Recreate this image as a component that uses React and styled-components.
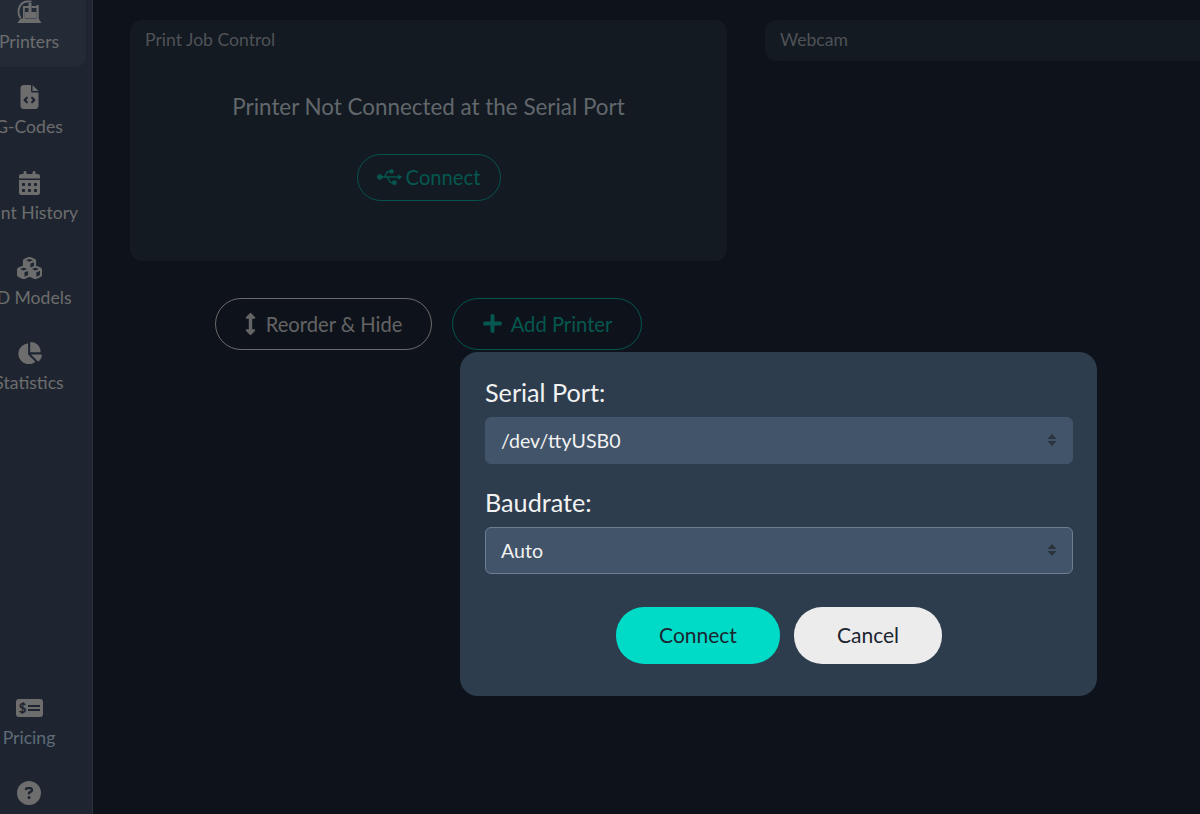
import React from 'react';
import styled, { createGlobalStyle } from 'styled-components';
import { FaArrowsAltV, FaPlus } from 'react-icons/fa';
import { FaFileCode, FaCalendarDays, FaCubes, FaChartPie, FaCircleQuestion, FaUsb } from 'react-icons/fa6';

const GlobalStyle = createGlobalStyle`
  html, body {
    margin: 0;
    height: 814px;
    overflow: hidden;
    background: #0e131b;
    font-family: Lato, "Liberation Sans", sans-serif;
  }
  #root {
    height: 100%;
  }
`;

const Page = styled.div`
  position: relative;
  display: flex;
  height: 814px;
  overflow: hidden;
`;

const Sidebar = styled.aside`
  flex: 0 0 93px;
  box-sizing: border-box;
  height: 814px;
  display: flex;
  flex-direction: column;
  align-items: flex-end;
  padding-right: 6px;
  background: #1e2530;
  border-right: 1px solid #2a313c;
  overflow: hidden;
`;

const NavGroup = styled.nav`
  display: flex;
  flex-direction: column;
  margin-top: -18px;
`;

const NavItem = styled.div`
  flex: 0 0 85.25px;
  width: 114px;
  box-sizing: border-box;
  padding-top: 18px;
  display: flex;
  flex-direction: column;
  align-items: center;
  gap: 8px;
  border-radius: 10px;
  color: #6d6d6d;
  font-size: 17.6px;
  line-height: 20px;
  white-space: nowrap;
  background: ${p => (p.$active ? '#232b37' : 'transparent')};

  svg {
    display: block;
    height: 24px;
    width: 25px;
  }
`;

const BottomGroup = styled.div`
  margin-top: auto;
  display: flex;
  flex-direction: column;
  padding-bottom: 9px;
`;

const PricingItem = styled(NavItem)`
  flex-basis: 85px;
  padding-top: 0;
  color: #5f6b78;

  svg {
    width: 27px;
  }
`;

const HelpIcon = styled.div`
  width: 114px;
  display: flex;
  justify-content: center;
  color: #6d6d6d;
  font-size: 24px;
  line-height: 0;
`;

const Main = styled.main`
  flex: 1;
  min-width: 0;
  padding: 20px 0 0 37px;
`;

const CardRow = styled.div`
  display: flex;
  align-items: flex-start;
  gap: 38px;
  width: 1200px;
`;

const JobCard = styled.section`
  flex: 0 0 597px;
  height: 241px;
  box-sizing: border-box;
  padding: 9px 15px;
  background: #131a22;
  border-radius: 12px;
`;

const WebcamCard = styled.section`
  flex: 1;
  height: 41px;
  box-sizing: border-box;
  padding: 9px 15px;
  background: #131a22;
  border-radius: 12px;
`;

const CardTitle = styled.div`
  font-size: 17.6px;
  line-height: 21px;
  color: #4f5256;
`;

const CardBody = styled.div`
  display: flex;
  flex-direction: column;
  align-items: center;
  padding-top: 42px;
`;

const StatusText = styled.div`
  font-size: 22.4px;
  line-height: 30px;
  color: #62676c;
  margin-bottom: 32px;
`;

const OutlineButton = styled.button`
  display: inline-flex;
  align-items: center;
  justify-content: center;
  gap: ${p => p.$gap}px;
  box-sizing: border-box;
  width: ${p => p.$width}px;
  height: ${p => p.$height}px;
  padding: 0 0 1px;
  background: transparent;
  border: 1px solid ${p => (p.$tone === 'green' ? '#06544d' : '#6a6a6a')};
  border-radius: 26px;
  color: ${p => (p.$tone === 'green' ? '#06574f' : '#646464')};
  font-family: inherit;
  font-size: 20.2px;

  svg {
    flex: none;
    width: ${p => p.$iconWidth}px;
    height: ${p => p.$iconHeight}px;
  }
`;

const ButtonRow = styled.div`
  display: flex;
  gap: 20px;
  margin: 37px 0 0 85px;
`;

const Popover = styled.div`
  position: absolute;
  left: 460px;
  top: 352px;
  width: 637px;
  height: 344px;
  box-sizing: border-box;
  padding: 24px 24px 0 25px;
  background: #2d3d4e;
  border-radius: 18px;
`;

const FieldLabel = styled.div`
  font-size: 25.2px;
  line-height: 32px;
  color: #f2f2f2;
  margin-bottom: 9px;
`;

const SelectBox = styled.div`
  display: flex;
  align-items: center;
  justify-content: space-between;
  box-sizing: border-box;
  height: 47px;
  width: 588px;
  padding: 0 15px 1px;
  background: #415469;
  border: 1px solid ${p => (p.$focused ? '#6d7f93' : '#415469')};
  border-radius: 6px;
  color: #f2f2f2;
  font-size: 19.6px;
  margin-bottom: 22px;
`;

const Updown = styled.svg`
  width: 10px;
  height: 14px;
  fill: #2a323d;
`;

const ActionRow = styled.div`
  display: flex;
  justify-content: center;
  gap: 14px;
  margin-top: 33px;
`;

const ActionButton = styled.button`
  width: ${p => p.$width}px;
  height: 57px;
  padding: 0 0 2px;
  border: 0;
  border-radius: 28px;
  background: ${p => (p.$primary ? '#00dbc7' : '#ececec')};
  color: #1c2530;
  font-family: inherit;
  font-size: 21px;
`;

const PrinterIcon = () => (
  <svg viewBox="17.500 0 25 24" fill="currentColor">
    <path d="M18 23l3-4.500h18l3 4.500z" />
    <path d="M37 5h2.200v14H37zM23.500 8h1.800v11h-1.800zM23.500 6h6v2h-6zM32 6h7v2h-7z" />
    <path d="M25.500 12H29V3h3v9h5v6H25.500z" />
    <path d="M21 18c-2.500-3.500-2.500-8.500-.5-12C22 3.500 25 1.500 28 1.500h4" fill="none" stroke="currentColor" strokeWidth="2" />
  </svg>
);

const BillIcon = () => (
  <svg viewBox="0 0 27 24">
    <rect y="3" width="27" height="18" rx="3" fill="#6d6d6d" />
    <text x="6.500" y="17" textAnchor="middle" fontFamily="Lato" fontWeight="900" fontSize="13" fill="#1e2530">$</text>
    <path d="M12 9h12v2H12zM12 13h12v2H12z" fill="#1e2530" />
  </svg>
);

const UpdownArrows = () => (
  <Updown viewBox="0 0 10 14">
    <path d="M5 1l4.500 5H.5zM5 13L.5 8h9z" />
  </Updown>
);

const navItems = [
  { label: 'Printers', icon: <PrinterIcon />, active: true },
  { label: 'G-Codes', icon: <FaFileCode /> },
  { label: 'Print History', icon: <FaCalendarDays /> },
  { label: '3D Models', icon: <FaCubes /> },
  { label: 'Statistics', icon: <FaChartPie /> },
];

export default function App() {
  return (
    <Page>
      <GlobalStyle />
      <Sidebar>
        <NavGroup>
          {navItems.map(item => (
            <NavItem key={item.label} $active={item.active}>
              {item.icon}
              {item.label}
            </NavItem>
          ))}
        </NavGroup>
        <BottomGroup>
          <PricingItem>
            <BillIcon />
            Pricing
          </PricingItem>
          <HelpIcon>
            <FaCircleQuestion />
          </HelpIcon>
        </BottomGroup>
      </Sidebar>
      <Main>
        <CardRow>
          <JobCard>
            <CardTitle>Print Job Control</CardTitle>
            <CardBody>
              <StatusText>Printer Not Connected at the Serial Port</StatusText>
              <OutlineButton $tone="green" $width={144} $height={47} $gap={4} $iconWidth={25} $iconHeight={20}>
                <FaUsb />
                Connect
              </OutlineButton>
            </CardBody>
          </JobCard>
          <WebcamCard>
            <CardTitle>Webcam</CardTitle>
          </WebcamCard>
        </CardRow>
        <ButtonRow>
          <OutlineButton $width={217} $height={52} $gap={10} $iconWidth={11} $iconHeight={22}>
            <FaArrowsAltV />
            Reorder &amp; Hide
          </OutlineButton>
          <OutlineButton $tone="green" $width={190} $height={52} $gap={8} $iconWidth={21} $iconHeight={21}>
            <FaPlus />
            Add Printer
          </OutlineButton>
        </ButtonRow>
      </Main>
      <Popover>
        <FieldLabel>Serial Port:</FieldLabel>
        <SelectBox>
          /dev/ttyUSB0
          <UpdownArrows />
        </SelectBox>
        <FieldLabel>Baudrate:</FieldLabel>
        <SelectBox $focused>
          Auto
          <UpdownArrows />
        </SelectBox>
        <ActionRow>
          <ActionButton $primary $width={164}>Connect</ActionButton>
          <ActionButton $width={148}>Cancel</ActionButton>
        </ActionRow>
      </Popover>
    </Page>
  );
}
